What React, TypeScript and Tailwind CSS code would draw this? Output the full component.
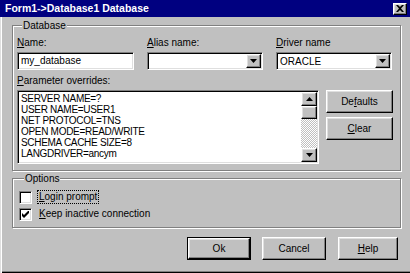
import React from "react";

const font = "font-['Liberation_Sans',Arial,sans-serif]";
const raised =
  "bg-[#c0c0c0] border border-t-white border-l-white border-r-black border-b-black shadow-[inset_-1px_-1px_#808080,inset_1px_1px_#dfdfdf]";
const sunken =
  "bg-white border border-t-[#808080] border-l-[#808080] border-r-white border-b-white shadow-[inset_1px_1px_#000,inset_-1px_-1px_#dfdfdf]";
const etched =
  "border border-[#808080] shadow-[inset_1px_1px_#fff,1px_1px_#fff]";

function Mn({ text, at = 0 }: { text: string; at?: number }) {
  return (
    <>
      {text.slice(0, at)}
      <span className="underline underline-offset-[1px]">{text[at]}</span>
      {text.slice(at + 1)}
    </>
  );
}

function Arrow({ down = true }: { down?: boolean }) {
  return (
    <svg width="7" height="4" viewBox="0 0 7 4" className="block">
      {down ? (
        <path d="M0 0h7L3.5 4z" fill="#000" />
      ) : (
        <path d="M0 4h7L3.5 0z" fill="#000" />
      )}
    </svg>
  );
}

function Combo({ value, width }: { value: string; width: string }) {
  return (
    <div className={`${sunken} ${width} h-[18px] flex items-stretch p-[1px]`}>
      <div className="flex-1 pl-[2px] leading-[14px] text-[10px] pt-[1px]">{value}</div>
      <div className={`${raised} w-[15px] flex items-center justify-center`}>
        <Arrow />
      </div>
    </div>
  );
}

function Button({
  children,
  width,
  h = "h-[23px]",
  isDefault = false,
}: {
  children: React.ReactNode;
  width: string;
  h?: string;
  isDefault?: boolean;
}) {
  const inner = (
    <div className={`${raised} ${isDefault ? "w-full h-full" : `${width} ${h}`} flex items-center justify-center text-[10px]`}>
      {children}
    </div>
  );
  if (!isDefault) return inner;
  return <div className={`${width} ${h} border border-black`}>{inner}</div>;
}

function Checkbox({ checked, label, focused = false }: { checked: boolean; label: React.ReactNode; focused?: boolean }) {
  return (
    <div className="flex items-center h-[14px]">
      <div className={`${sunken} w-[13px] h-[13px] flex items-center justify-center`}>
        {checked && (
          <svg width="7" height="7" viewBox="0 0 7 7">
            <path d="M0 2v3l2 2 5-5V-1L2 4z" fill="#000" />
          </svg>
        )}
      </div>
      <span
        className={`ml-[6px] text-[10px] leading-[12px] px-[1px] ${
          focused ? "outline outline-1 outline-dotted outline-black" : ""
        }`}
      >
        {label}
      </span>
    </div>
  );
}

const params = [
  "SERVER NAME=?",
  "USER NAME=USER1",
  "NET PROTOCOL=TNS",
  "OPEN MODE=READ/WRITE",
  "SCHEMA CACHE SIZE=8",
  "LANGDRIVER=ancym",
];

export default function App() {
  return (
    <div
      className={`${font} w-[410px] h-[273px] bg-[#c0c0c0] text-black flex flex-col overflow-hidden shadow-[inset_1px_0_#dfdfdf,inset_2px_0_#fff,inset_0_-1px_#000,inset_0_-2px_#808080]`}
    >
      {/* title bar */}
      <div className="h-[17px] bg-[#000080] flex items-center justify-between pl-[5px] pr-[3px]">
        <span className="text-white font-bold text-[10.5px] leading-[17px]">
          Form1-&gt;Database1 Database
        </span>
        <div className={`${raised} w-[14px] h-[12px] flex items-center justify-center`}>
          <svg width="8" height="7" viewBox="0 0 8 7">
            <path d="M0 0h2l2 2 2-2h2L5 3.5 8 7H6L4 5 2 7H0l3-3.5z" fill="#000" />
          </svg>
        </div>
      </div>

      <div className="pl-[12px] pr-[9px] pt-[2px] flex flex-col">
        {/* Database group */}
        <fieldset className={`${etched} px-[4px] pb-[6px] pt-[4px]`}>
          <legend className="ml-[5px] px-[1px] bg-[#c0c0c0] text-[10px] leading-[13px]">Database</legend>
          <div className="flex">
            <div className="w-[117px]">
              <div className="text-[10px] leading-[13px] mb-[3px]">
                <Mn text="Name:" />
              </div>
              <div className={`${sunken} h-[18px] pl-[3px] text-[10px] leading-[15px]`}>my_database</div>
            </div>
            <div className="ml-[13px] w-[116px]">
              <div className="text-[10px] leading-[13px] mb-[3px]">
                <Mn text="Alias name:" />
              </div>
              <Combo value="" width="w-[116px]" />
            </div>
            <div className="ml-[13px] w-[116px]">
              <div className="text-[10px] leading-[13px] mb-[3px]">
                <Mn text="Driver name" />
              </div>
              <Combo value="ORACLE" width="w-[116px]" />
            </div>
          </div>
          <div className="text-[10px] leading-[13px] mt-[4px] mb-[3px]">
            <Mn text="Parameter overrides:" />
          </div>
          <div className="flex items-start">
            <div className={`${sunken} w-[302px] h-[74px] flex p-[1px]`}>
              <div className="flex-1 pl-[2px] pt-[1px] text-[10px] leading-[11px] tracking-[-0.3px] overflow-hidden">
                {params.map((p) => (
                  <div key={p}>{p}</div>
                ))}
              </div>
              <div className="w-[16px] flex flex-col">
                <div className={`${raised} h-[14px] flex items-center justify-center`}>
                  <Arrow down={false} />
                </div>
                <div className={`${raised} h-[13px]`} />
                <div className="flex-1 bg-[repeating-conic-gradient(#c0c0c0_0_25%,#fff_0_50%)] bg-[length:2px_2px]" />
                <div className={`${raised} h-[14px] flex items-center justify-center`}>
                  <Arrow />
                </div>
              </div>
            </div>
            <div className="ml-[7px] flex flex-col gap-[4px]">
              <Button width="w-[67px]">
                <Mn text="Defaults" at={2} />
              </Button>
              <Button width="w-[67px]">
                <Mn text="Clear" />
              </Button>
            </div>
          </div>
        </fieldset>

        {/* Options group */}
        <fieldset className={`${etched} mt-[1px] px-[6px] pt-[5px] pb-[6px]`}>
          <legend className="ml-[5px] px-[1px] bg-[#c0c0c0] text-[10px] leading-[13px]">Options</legend>
          <div className="flex flex-col gap-[3px]">
            <Checkbox checked={false} focused label={<Mn text="Login prompt" />} />
            <Checkbox checked label={<Mn text="Keep inactive connection" />} />
          </div>
        </fieldset>

        {/* dialog buttons */}
        <div className="mt-[9px] mr-[3px] flex justify-end">
          <Button width="w-[64px]" isDefault>
            Ok
          </Button>
          <div className="ml-[11px]">
            <Button width="w-[64px]">Cancel</Button>
          </div>
          <div className="ml-[12px]">
            <Button width="w-[60px]">
              <Mn text="Help" />
            </Button>
          </div>
        </div>
      </div>
    </div>
  );
}
